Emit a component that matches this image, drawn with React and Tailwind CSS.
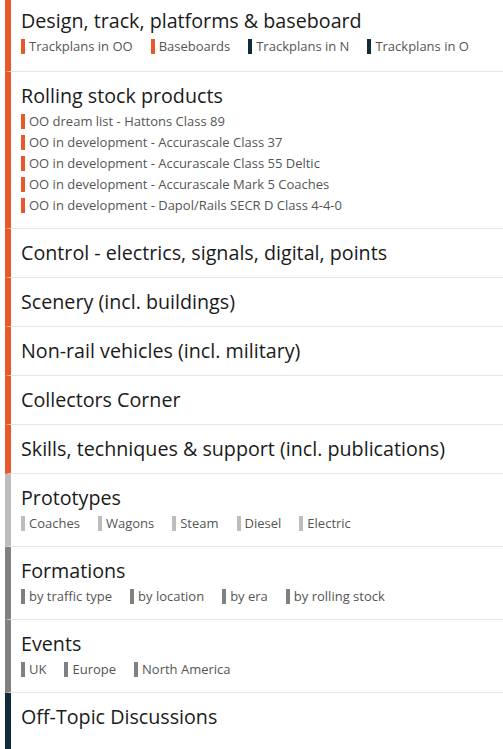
const ORANGE = 'border-l-[#e8582b]'
const NAVY = 'border-l-[#0f2c3b]'
const LIGHT = 'border-l-[#bdbdbd]'
const DARK = 'border-l-[#808080]'

const forums = [
  {
    title: 'Design, track, platforms & baseboard',
    bar: ORANGE,
    first: true,
    subs: [
      { name: 'Trackplans in OO', color: 'bg-[#e8582b]' },
      { name: 'Baseboards', color: 'bg-[#e8582b]' },
      { name: 'Trackplans in N', color: 'bg-[#0f2c3b]' },
      { name: 'Trackplans in O', color: 'bg-[#0f2c3b]' },
    ],
  },
  {
    title: 'Rolling stock products',
    bar: ORANGE,
    stacked: true,
    subs: [
      { name: 'OO dream list - Hattons Class 89', color: 'bg-[#e8582b]' },
      { name: 'OO in development - Accurascale Class 37', color: 'bg-[#e8582b]' },
      { name: 'OO in development - Accurascale Class 55 Deltic', color: 'bg-[#e8582b]' },
      { name: 'OO in development - Accurascale Mark 5 Coaches', color: 'bg-[#e8582b]' },
      { name: 'OO in development - Dapol/Rails SECR D Class 4-4-0', color: 'bg-[#e8582b]' },
    ],
  },
  { title: 'Control - electrics, signals, digital, points', bar: ORANGE },
  { title: 'Scenery (incl. buildings)', bar: ORANGE },
  { title: 'Non-rail vehicles (incl. military)', bar: ORANGE },
  { title: 'Collectors Corner', bar: ORANGE },
  { title: 'Skills, techniques & support (incl. publications)', bar: ORANGE },
  {
    title: 'Prototypes',
    bar: LIGHT,
    subs: ['Coaches', 'Wagons', 'Steam', 'Diesel', 'Electric'].map(n => ({ name: n, color: 'bg-[#bdbdbd]' })),
  },
  {
    title: 'Formations',
    bar: DARK,
    subs: ['by traffic type', 'by location', 'by era', 'by rolling stock'].map(n => ({ name: n, color: 'bg-[#808080]' })),
  },
  {
    title: 'Events',
    bar: DARK,
    subs: ['UK', 'Europe', 'North America'].map(n => ({ name: n, color: 'bg-[#808080]' })),
  },
  { title: 'Off-Topic Discussions', bar: NAVY, last: true },
]

function SubLink({ sub }) {
  return (
    <a href="#" className="flex items-center mr-[18px] text-[13px] leading-[21px] text-[#555]">
      <span className={`inline-block w-[4px] h-[15px] mr-[4px] ${sub.color}`}></span>
      {sub.name}
    </a>
  )
}

export default function App() {
  return (
    <div className="bg-white h-[749px] overflow-hidden" style={{ fontFamily: '"Open Sans", sans-serif' }}>
      <div className="-mt-[1px]">
        {forums.map(f => (
          <div
            key={f.title}
            className={`ml-[5px] border-l-[6px] ${f.bar} border-b border-b-[#e6e6e6] pl-[10px] ${
              f.first ? 'pt-[10px] pb-[14px]' : f.last ? 'pt-[12px] pb-[40px]' : 'pt-[12px] pb-[12px]'
            }`}
          >
            <h3 className="text-[19.7px] leading-[24px] text-[#1a1a1a]">{f.title}</h3>
            {f.subs && (
              <div className={`mt-[3px] flex ${f.stacked ? 'flex-col' : 'flex-wrap'}`}>
                {f.subs.map(s => <SubLink key={s.name} sub={s} />)}
              </div>
            )}
          </div>
        ))}
      </div>
    </div>
  )
}
